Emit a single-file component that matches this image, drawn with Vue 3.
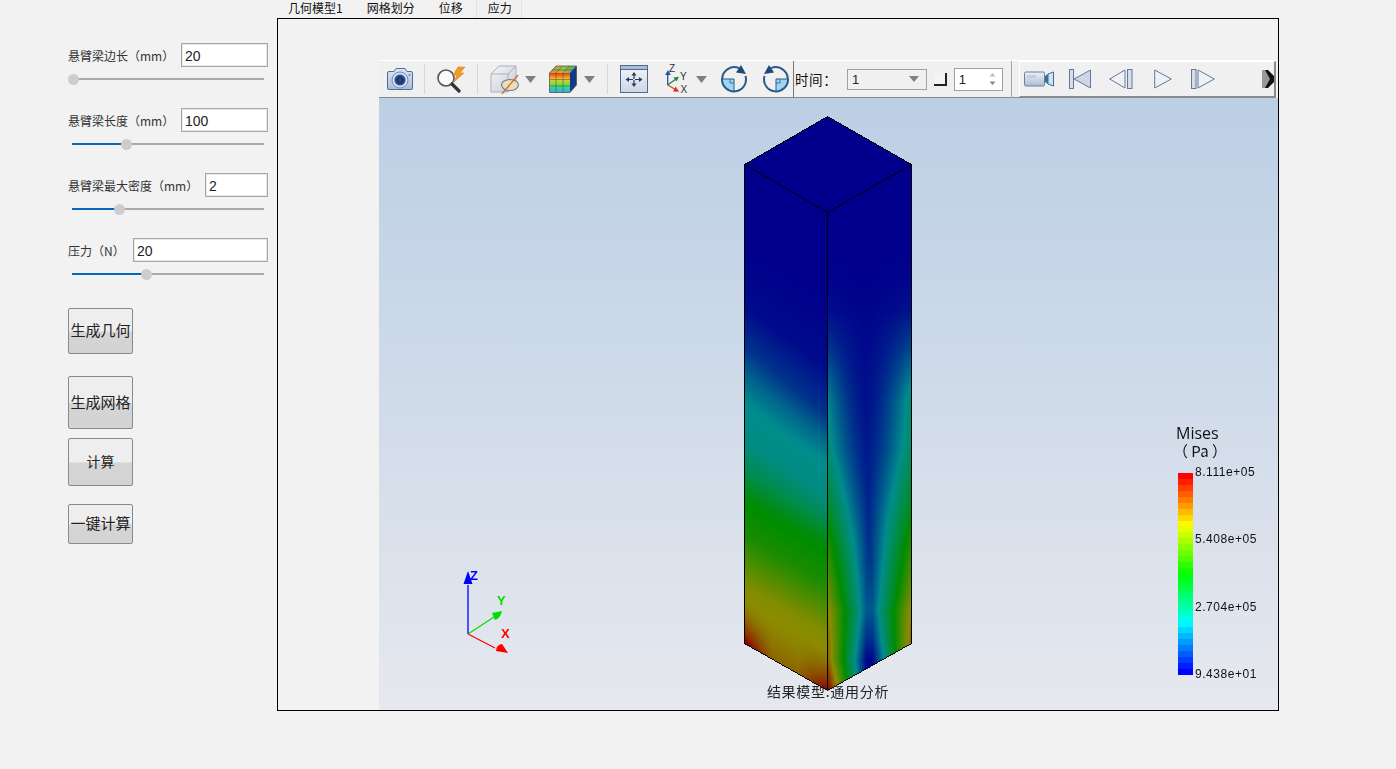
<script setup>
import { onMounted, ref } from 'vue'

const params = [
  { label: '悬臂梁边长（mm）', value: '20', cls: 'w87', knob: 5 },
  { label: '悬臂梁长度（mm）', value: '100', cls: 'w87', knob: 58 },
  { label: '悬臂梁最大密度（mm）', value: '2', cls: 'w63', knob: 51 },
  { label: '压力（N）', value: '20', cls: 'w135', knob: 78 }
]
const buttons = [
  { text: '生成几何', cls: 'b1' },
  { text: '生成网格', cls: 'b2' },
  { text: '计算', cls: 'b3' },
  { text: '一键计算', cls: 'b4' }
]
const tabs = ['几何模型1', '网格划分', '位移', '应力']

function rainbow(t) {
  t = Math.max(0, Math.min(1, t))
  if (t < 0.25) return [0, t / 0.25, 1]
  if (t < 0.5) return [0, 1, 1 - (t - 0.25) / 0.25]
  if (t < 0.75) return [(t - 0.5) / 0.25, 1, 0]
  return [1, 1 - (t - 0.75) / 0.25, 0]
}
const bands = Array.from({ length: 34 }, (_, i) => {
  const c = rainbow(1 - i / 33).map(v => Math.round(v * 255))
  return `rgb(${c[0]},${c[1]},${c[2]})`
})

function lerpTable(tbl, x) {
  if (x <= tbl[0][0]) return tbl[0][1]
  for (let i = 1; i < tbl.length; i++) {
    if (x <= tbl[i][0]) {
      const a = tbl[i - 1], b = tbl[i]
      const k = (x - a[0]) / (b[0] - a[0])
      return a[1] + (b[1] - a[1]) * k
    }
  }
  return tbl[tbl.length - 1][1]
}
const leftV = [[0.18, 0], [0.3, 0.02], [0.38, 0.09], [0.44, 0.18], [0.5, 0.25], [0.58, 0.27], [0.64, 0.36], [0.7, 0.49], [0.78, 0.55], [0.88, 0.73], [0.95, 0.77], [1, 0.82]]
const center = [[280, 0], [400, 0.03], [500, 0.06], [560, 0.1], [610, 0.16], [640, 0.08], [660, 0.01], [700, 0.05]]
const edge = [[255, 0], [310, 0.02], [350, 0.1], [400, 0.23], [450, 0.26], [500, 0.36], [550, 0.48], [600, 0.56], [650, 0.76], [690, 0.95]]

const canvasRef = ref(null)
onMounted(() => {
  const cv = canvasRef.value
  const ctx = cv.getContext('2d')
  const ox = 379, oy = 98
  const W = cv.width, H = cv.height
  const img = ctx.createImageData(W, H)
  const L = 140 / 255
  for (let py = 0; py < H; py++) {
    for (let px = 0; px < W; px++) {
      const x = px + ox, y = py + oy
      let t = -1
      if (x >= 744 && x <= 827) {
        const u = (x - 744) / 83
        const top = 164 + 48 * u, bot = 643 + 47 * u
        const apex = 164 - 48 * u
        if (y >= apex && y < top) t = 0
        else if (y >= top && y <= bot) {
          const v = (y - top) / 478
          t = lerpTable(leftV, v - 0.045 * u * Math.max(0, 1 - Math.abs(v - 0.42) * 4))
          const corner = Math.max(0, v - 0.9) / 0.1
          const sideL = Math.max(0, 1 - u * 3), sideR = Math.max(0, (u - 0.65) / 0.35)
          t += corner * corner * (sideL * 0.2 + sideR * 0.18)
        }
      } else if (x > 827 && x <= 911) {
        const u = (x - 827) / 84
        const top = 212 - 48 * u, bot = 690 - 47 * u
        const apex = 116 + 48 * u
        if (y >= apex && y < top) t = 0
        else if (y >= top && y <= bot) {
          const c = 869 + (y < 560 ? (560 - y) * -0.02 : 0)
          const raw = Math.abs(x - c) / 41
          const off = 0.08 * Math.max(0, Math.min(1, (y - 500) / 100))
          const d = Math.max(0, raw - off) / (1 - off)
          const p = y < 400 ? 1.6 : y < 500 ? 1.6 - (y - 400) / 100 * 0.5 : y < 560 ? 1.1 - (y - 500) / 60 * 0.1 : 1
          t = lerpTable(center, y) + Math.pow(d, p) * lerpTable(edge, y)
        }
      }
      if (t >= 0) {
        const c = rainbow(t)
        const i = (py * W + px) * 4
        img.data[i] = c[0] * 255 * L
        img.data[i + 1] = c[1] * 255 * L
        img.data[i + 2] = c[2] * 255 * L
        img.data[i + 3] = 255
      }
    }
  }
  // aliased black edges, one pixel wide
  const seg = (x0, y0, x1, y1) => {
    const n = Math.max(Math.abs(x1 - x0), Math.abs(y1 - y0))
    for (let k = 0; k <= n; k++) {
      const x = Math.round(x0 + (x1 - x0) * k / n) - ox
      const y = Math.round(y0 + (y1 - y0) * k / n) - oy
      const i = (y * W + x) * 4
      img.data[i] = img.data[i + 1] = img.data[i + 2] = 0
      img.data[i + 3] = 255
    }
  }
  seg(744, 164, 827, 116); seg(827, 116, 911, 164)
  seg(911, 164, 911, 643); seg(744, 164, 744, 643)
  seg(744, 643, 827, 690); seg(827, 690, 911, 643)
  seg(744, 164, 827, 212); seg(827, 212, 911, 164)
  seg(827, 212, 827, 690)
  ctx.putImageData(img, 0, 0)
})
</script>

<template>
  <div class="page">
    <aside class="side">
      <div v-for="p in params" :key="p.label" class="param">
        <div class="row">
          <label class="lab">{{ p.label }}</label>
          <input class="inp" :class="p.cls" :value="p.value" />
        </div>
        <div class="slider">
          <span class="track"></span>
          <span v-if="p.knob > 5" class="fill" :style="{ width: p.knob - 4 + 'px' }"></span>
          <span class="knob" :style="{ left: p.knob - 5 + 'px' }"></span>
        </div>
      </div>
      <button v-for="b in buttons" :key="b.text" class="btn" :class="b.cls">{{ b.text }}</button>
    </aside>

    <main class="main">
      <nav class="tabs">
        <span v-for="(t, i) in tabs" :key="t" class="tab" :class="{ active: i === 3 }">{{ t }}</span>
      </nav>
      <section class="frame">
        <div class="toolbar">
          <svg class="ic cam" viewBox="0 0 26 24">
            <defs>
              <linearGradient id="gCam" x1="0" y1="0" x2="0" y2="1"><stop offset="0" stop-color="#dbe6f3"/><stop offset="1" stop-color="#a8bfd9"/></linearGradient>
              <radialGradient id="gLens"><stop offset="0" stop-color="#2d4f9c"/><stop offset="0.6" stop-color="#1a2f6b"/><stop offset="1" stop-color="#7f9cc4"/></radialGradient>
            </defs>
            <path d="M7 4.5 L9 1.5 H18 L20 4.5 H24 Q25.5 4.5 25.5 6 V21 Q25.5 22.5 24 22.5 H2 Q0.5 22.5 0.5 21 V6 Q0.5 4.5 2 4.5 Z" fill="url(#gCam)" stroke="#4d6c97"/>
            <circle cx="13" cy="13" r="8" fill="#dfe9f5" stroke="#6a88b1"/>
            <circle cx="13" cy="13" r="6" fill="url(#gLens)"/>
            <circle cx="22.5" cy="8" r="1" fill="#5f7ea6"/>
          </svg>
          <i class="sep s11"></i>
          <svg class="ic mag" viewBox="0 0 30 28">
            <circle cx="10" cy="13" r="8" fill="#f8fafc" stroke="#555" stroke-width="1.6"/>
            <path d="M16 19 L23 26" stroke="#333" stroke-width="3.2" stroke-linecap="round"/>
            <path d="M22 2 L29 2 L24 8 L28 8 L18 17 L21 10 L17 10 Z" fill="#f09a1f" stroke="#d98016" stroke-width="0.5"/>
          </svg>
          <i class="sep s11"></i>
          <svg class="ic box" viewBox="0 0 32 30">
            <defs><linearGradient id="gBox" x1="0" y1="0" x2="1" y2="1"><stop offset="0" stop-color="#f7f7f8"/><stop offset="1" stop-color="#c4cbd6"/></linearGradient></defs>
            <path d="M1 10 L9 2 H26 V20 L18 28 H1 Z" fill="url(#gBox)" stroke="#aab0ba"/>
            <path d="M1 10 H18 V28 M18 10 L26 2" fill="none" stroke="#aab0ba"/>
            <ellipse cx="20" cy="21" rx="8.5" ry="5.5" fill="#e9dfb2" stroke="#6e7f98" stroke-width="1.2"/>
            <path d="M12 30 L28 11" stroke="#d8602a" stroke-width="1.2"/>
          </svg>
          <svg class="ic arrow a3" viewBox="0 0 11 7"><path d="M0 0 H11 L5.5 7 Z" fill="#808080"/></svg>
          <svg class="ic cube" viewBox="0 0 28 28">
            <defs>
              <linearGradient id="gFace" x1="0" y1="0" x2="0" y2="1"><stop offset="0" stop-color="#f03020"/><stop offset="0.32" stop-color="#f5c820"/><stop offset="0.6" stop-color="#60e050"/><stop offset="1" stop-color="#20b0f0"/></linearGradient>
              <linearGradient id="gTop" x1="0" y1="0" x2="1" y2="0"><stop offset="0" stop-color="#e08a30"/><stop offset="0.5" stop-color="#a8c040"/><stop offset="1" stop-color="#40b070"/></linearGradient>
            </defs>
            <path d="M0.5 8 L7 1 H27.5 L21 8 Z" fill="url(#gTop)"/>
            <path d="M21 8 L27.5 1 V20 L21 27.5 Z" fill="#123a8a"/>
            <rect x="0.5" y="8" width="20.5" height="19.5" fill="url(#gFace)"/>
            <path d="M7 8 V27.5 M14 8 V27.5 M0.5 14.5 H21 M0.5 21 H21 M21 8 L27.5 1 M7 8 L13.5 1 M14 8 L20.5 1 M3 5 H24 M21 14.5 L27.5 7.5 M21 21 L27.5 14" stroke="#3a3a46" stroke-width="0.6" fill="none" opacity="0.8"/>
            <path d="M0.5 8 L7 1 H27.5 V20 L21 27.5 H0.5 Z" fill="none" stroke="#555" stroke-width="0.8"/>
          </svg>
          <svg class="ic arrow a7" viewBox="0 0 11 7"><path d="M0 0 H11 L5.5 7 Z" fill="#808080"/></svg>
          <i class="sep s12"></i>
          <svg class="ic fit" viewBox="0 0 28 28">
            <defs><linearGradient id="gFit" x1="0" y1="0" x2="0" y2="1"><stop offset="0" stop-color="#f4f6fa"/><stop offset="1" stop-color="#cdd6e4"/></linearGradient></defs>
            <rect x="0.5" y="0.5" width="27" height="27" fill="url(#gFit)" stroke="#4e6a93"/>
            <rect x="1" y="1" width="26" height="3" fill="#a9bcd6"/>
            <path d="M1 4.5 H27" stroke="#4e6a93"/>
            <path d="M14 7 L11.5 10.5 H13.4 V14 H14.6 V10.5 H16.5 Z M14 22 L11.5 18.5 H13.4 V15 H14.6 V18.5 H16.5 Z M5.5 14.5 L9 12 V13.9 H13 V15.1 H9 V17 Z M22.5 14.5 L19 12 V13.9 H15 V15.1 H19 V17 Z" fill="#1f3a63"/>
          </svg>
          <svg class="ic axes" viewBox="0 0 25 28">
            <path d="M2.7 20 V9" stroke="#1c52b0" stroke-width="1.3"/><path d="M3 5 L0.2 10 H5.8 Z" fill="#1c52b0"/>
            <path d="M2.7 20 L11 14" stroke="#178a3c" stroke-width="1.3"/><path d="M14 11.7 L8.5 12.5 L11.5 16.5 Z" fill="#178a3c"/>
            <path d="M2.7 20 L10.5 24.5" stroke="#e03030" stroke-width="1.3"/><path d="M14 26.7 L8 26.5 L10.8 21.5 Z" fill="#e03030"/>
            <text x="4" y="7" class="ax">Z</text>
            <text x="15" y="15" class="ax">Y</text>
            <text x="15.5" y="28" class="ax">X</text>
          </svg>
          <svg class="ic arrow a6" viewBox="0 0 11 7"><path d="M0 0 H11 L5.5 7 Z" fill="#808080"/></svg>
          <svg class="ic rot r1" viewBox="0 0 26 28">
            <path d="M13 14 H1 A12 12 0 0 0 13 26 Z" fill="#9fd4f5"/>
            <path d="M1.2 14 A12 12 0 0 1 18 3.2 M24.5 11 A12 12 0 1 1 1 14" fill="none" stroke="#2b5a88" stroke-width="2"/>
            <path d="M1 14 H13 V26" fill="none" stroke="#2b5a88" stroke-width="1"/>
            <path d="M9 14 V18 H13" fill="none" stroke="#2b5a88" stroke-width="0.8"/>
            <path d="M25 9 L15 7.5 L20 0 Z" fill="#1d4a7c"/>
          </svg>
          <svg class="ic rot r2" viewBox="0 0 27 28">
            <path d="M14 14 H26 A12 12 0 0 1 14 26 Z" fill="#9fd4f5"/>
            <path d="M25.8 14 A12 12 0 0 0 9 3.2 M2.5 11 A12 12 0 1 0 26 14" fill="none" stroke="#2b5a88" stroke-width="2"/>
            <path d="M26 14 H14 V26" fill="none" stroke="#2b5a88" stroke-width="1"/>
            <path d="M18 14 V18 H14" fill="none" stroke="#2b5a88" stroke-width="0.8"/>
            <path d="M2 9 L12 7.5 L7 0 Z" fill="#1d4a7c"/>
          </svg>
          <i class="sep-dark"></i>
          <span class="time">时间：</span>
          <div class="combo"><span>1</span><svg class="combo-arr" viewBox="0 0 10 6"><path d="M0 0 H10 L5 6 Z" fill="#808080"/></svg></div>
          <i class="corner"></i>
          <div class="spin"><span>1</span>
            <svg class="spin-arr" viewBox="0 0 7 14"><path d="M3.5 1 L6.5 4.5 H0.5 Z" fill="#bbb"/><path d="M3.5 13 L6.5 9.5 H0.5 Z" fill="#888"/></svg>
          </div>
          <i class="sep-mid"></i>
          <div class="sub">
            <svg class="ic cc" viewBox="0 0 30 16">
              <defs>
                <linearGradient id="gCc" x1="0" y1="0" x2="0" y2="1"><stop offset="0" stop-color="#eef2f7"/><stop offset="1" stop-color="#aebcd0"/></linearGradient>
              </defs>
              <rect x="0.5" y="1" width="20" height="14" rx="1.5" fill="url(#gCc)" stroke="#6b7f9c"/>
              <rect x="3" y="4" width="9" height="3" fill="#c4cedc"/>
              <path d="M21 5 L24 3 V13 L21 11 Z" fill="#3a6d9c"/>
              <path d="M24 3 L29.5 1 V15 L24 13 Z" fill="#cfe4f5" stroke="#3a6d9c"/>
            </svg>
            <svg class="ic m1" viewBox="0 0 22 20"><rect x="0.5" y="0.5" width="4" height="19" fill="#d6deea" stroke="#66789a"/><path d="M21.5 1 V19 L5 10 Z" fill="#ccd6e4" stroke="#66789a"/></svg>
            <svg class="ic m2" viewBox="0 0 24 20"><path d="M16 1 V19 L0.7 10 Z" fill="#eef1f6" stroke="#66789a"/><rect x="18.5" y="0.5" width="4.5" height="19" fill="#d6deea" stroke="#66789a"/></svg>
            <svg class="ic m3" viewBox="0 0 18 20"><path d="M0.7 1 V19 L17.3 10 Z" fill="#eef1f6" stroke="#66789a"/></svg>
            <svg class="ic m4" viewBox="0 0 24 20"><rect x="0.5" y="0.5" width="4.5" height="19" fill="#d6deea" stroke="#66789a"/><path d="M7 1 V19 L23.3 10 Z" fill="#eef1f6" stroke="#66789a"/></svg>
            <svg class="ic more" viewBox="0 0 12 18">
              <path d="M0 0 H6 L12 6 V12 L6 18 H0 L5 9 Z" fill="#111"/>
              <path d="M0 0 H3 L8 9 L3 18 H0 Z" fill="#999"/>
            </svg>
          </div>
        </div>
        <div class="viewport">
          <canvas ref="canvasRef" class="beam" width="899" height="612"></canvas>
          <svg class="triad" viewBox="0 0 60 90">
            <path d="M9 69 V20" stroke="#0000ff" stroke-width="1.3"/>
            <path d="M9 6 L4.5 19 H13.5 Z" fill="#0000ff"/>
            <path d="M9 69 L35 52" stroke="#00e000" stroke-width="1.2"/>
            <path d="M43 46 L33 48 L36 55 Q41 54 43 46 Z" fill="#00e000"/>
            <path d="M9 69 L36 83" stroke="#ff0000" stroke-width="1.2"/>
            <path d="M49 88 L37 86 Q37 80 43 79 Z" fill="#ff0000"/>
            <text x="11" y="15" class="tz">Z</text>
            <text x="38" y="40" class="ty">Y</text>
            <text x="42" y="73" class="tx">X</text>
          </svg>
          <div class="title">结果模型:通用分析</div>
          <div class="legend">
            <div class="l-name">Mises</div>
            <div class="l-unit">（ Pa ）</div>
            <div class="l-body">
              <div class="bar"><span v-for="(c, i) in bands" :key="i" class="band" :style="{ background: c }"></span></div>
              <div class="ticks"><span>8.111e+05</span><span>5.408e+05</span><span>2.704e+05</span><span>9.438e+01</span></div>
            </div>
          </div>
        </div>
      </section>
    </main>
  </div>
</template>

<style>
html, body { margin: 0; background: #f2f2f2; }
</style>

<style scoped>
.page {
  width: 1396px; height: 769px; display: flex; overflow: hidden; background: #f2f2f2;
  font-family: "Noto Sans CJK SC", "Liberation Sans", sans-serif; color: #222;
}
.side { width: 277px; box-sizing: border-box; padding: 43px 9px 0 68px; display: flex; flex-direction: column; align-items: flex-start; flex: none; }
.param { width: 200px; margin-bottom: 24px; }
.param:nth-of-type(4) { margin-bottom: 0; }
.row { display: flex; align-items: center; height: 24px; }
.lab { font-size: 12px; color: #333; white-space: nowrap; }
.inp {
  margin-left: auto; height: 24px; box-sizing: border-box; border: 1px solid #a6a6a6; outline: 1px solid #e8e8e8; outline-offset: -2px;
  background: #fff; padding: 1px 0 0 3px; font: 14px "Liberation Sans", sans-serif; color: #222;
}
.w87 { width: 87px; } .w63 { width: 63px; } .w135 { width: 135px; }
.slider { position: relative; height: 10px; margin-top: 7px; width: 196px; }
.track { position: absolute; left: 4px; right: 0; top: 4px; height: 2px; background: #a9a9a9; }
.fill { position: absolute; left: 4px; top: 4px; height: 2px; background: #0a66b7; }
.knob { position: absolute; top: -0.5px; width: 11px; height: 11px; border-radius: 50%; background: #cdcdcd; box-sizing: border-box; }
.btn {
  display: block; width: 65px; padding: 0 0 3px; border: 1px solid #8a8a8a; border-radius: 2px; font: 15px "Noto Sans CJK SC", sans-serif; color: #222; white-space: nowrap;
  background: linear-gradient(#eeeeee 0, #eeeeee 50%, #d5d5d5 52%, #d3d3d3 100%);
}
.b1 { height: 46px; margin-top: 29px; }
.b2 { height: 53px; margin-top: 22px; }
.b3 { height: 48px; margin-top: 9px; font-size: 14px; }
.b4 { height: 40px; margin-top: 18px; }

.main { flex: none; width: 1002px; display: flex; flex-direction: column; }
.tabs { height: 18px; display: flex; margin-left: -1px; }
.tab { padding: 0 12px; font-size: 12px; line-height: 15px; color: #111; box-sizing: border-box; white-space: nowrap; }
.tab.active { margin-left: 1px; padding: 0 11px; width: 46px; text-align: center; background: #f0f0f0; border: 1px solid #e2e2e2; border-width: 0 1px 0 1px; }
.frame { width: 1002px; height: 693px; box-sizing: border-box; border: 1px solid #000; padding: 41px 0 0 101px; display: flex; flex-direction: column; }

.toolbar {
  width: 897px; height: 38px; box-sizing: border-box; display: flex; align-items: center; background: #f0f0f0;
  border-top: 1px solid #fff; border-bottom: 1px solid #8a8a8a; flex: none; position: relative;
}
.ic { display: block; flex: none; }
.cam { width: 26px; height: 24px; margin-left: 8px; }
.sep { width: 1px; height: 30px; background: #d6d6d6; flex: none; }
.s11 { margin-left: 11px; } .s12 { margin-left: 12px; }
.mag { width: 30px; height: 28px; margin-left: 11px; }
.box { width: 32px; height: 30px; margin-left: 12px; }
.arrow { width: 11px; height: 7px; }
.a3 { margin-left: 3px; } .a7 { margin-left: 7px; } .a6 { margin-left: 6px; }
.cube { width: 28px; height: 28px; margin-left: 13px; }
.fit { width: 28px; height: 28px; margin-left: 12px; }
.axes { width: 25px; height: 28px; margin-left: 17px; overflow: visible; }
.ax { font: 10px "Liberation Sans", sans-serif; fill: #333; }
.rot { width: 26px; height: 28px; }
.r1 { margin-left: 14px; } .r2 { width: 27px; margin-left: 15px; }
.sep-dark { width: 1px; height: 37px; background: #777; margin-left: 4px; flex: none; }
.time { width: 40px; margin-left: 1px; font-size: 13.5px; letter-spacing: 0.6px; white-space: nowrap; color: #111; }
.combo { width: 81px; height: 21px; box-sizing: border-box; margin-left: 12px; border: 1px solid #a0a0a0; display: flex; align-items: center; justify-content: space-between; padding: 0 7px 0 4px; font: 13px "Liberation Sans", sans-serif; color: #222; }
.combo-arr { width: 10px; height: 6px; }
.corner { width: 13px; height: 13px; margin-left: 7px; box-sizing: border-box; border-right: 2px solid #222; border-bottom: 2px solid #222; background: #f4f4f4; flex: none; }
.spin { width: 50px; height: 23px; box-sizing: border-box; margin-left: 7px; border: 1px solid #a0a0a0; background: #fff; display: flex; align-items: center; justify-content: space-between; padding: 0 6px 0 4px; font: 13px "Liberation Sans", sans-serif; color: #222; }
.spin-arr { width: 7px; height: 14px; }
.sep-mid { width: 1px; height: 37px; background: #a5a5a5; margin-left: 8px; flex: none; }
.sub { margin-left: 7px; flex: 1; height: 36px; box-sizing: border-box; margin-bottom: 1px; display: flex; align-items: center; border-top: 1px solid #fff; border-left: 1px solid #fff; border-right: 2px solid #8a8a8a; border-bottom: 1px solid #8a8a8a; }
.cc { width: 30px; height: 16px; margin-left: 4px; }
.m1 { width: 22px; height: 20px; margin-left: 15px; }
.m2 { width: 24px; height: 20px; margin-left: 18px; }
.m3 { width: 18px; height: 20px; margin-left: 21px; }
.m4 { width: 24px; height: 20px; margin-left: 19px; }
.more { width: 12px; height: 18px; margin-left: 47px; }

.viewport { position: relative; width: 899px; flex: 1; background: linear-gradient(#bbcfe5 0%, #e6e8ee 100%); overflow: hidden; }
.beam { position: absolute; left: 0; top: 0; }
.triad { position: absolute; left: 80px; top: 467px; width: 60px; height: 90px; overflow: visible; }
.tz, .ty, .tx { font: bold 13px "Liberation Sans", sans-serif; }
.tz { fill: #0000ff; } .ty { fill: #00e000; } .tx { fill: #ff0000; }
.title { position: absolute; left: 349px; width: 200px; top: 583px; text-align: center; font-size: 14px; letter-spacing: 0.7px; line-height: 20px; color: #222; }
.legend { position: absolute; left: 797px; top: 327px; width: 90px; font-family: "Open Sans", sans-serif; color: #111; }
.l-name { font-size: 16px; line-height: 17px; }
.l-unit { font-size: 15px; line-height: 17px; margin-left: -3px; font-family: "Noto Sans CJK SC", sans-serif; }
.l-body { display: flex; margin-top: 12px; margin-left: 2px; height: 204px; }
.bar { width: 15px; height: 202px; margin-top: 2px; display: flex; flex-direction: column; }
.band { flex: 1; display: block; }
.ticks { margin-left: 2px; display: flex; flex-direction: column; justify-content: space-between; height: 217px; margin-top: -6px; font: 12px/15px "Liberation Sans", sans-serif; letter-spacing: 0.55px; color: #111; }
</style>
